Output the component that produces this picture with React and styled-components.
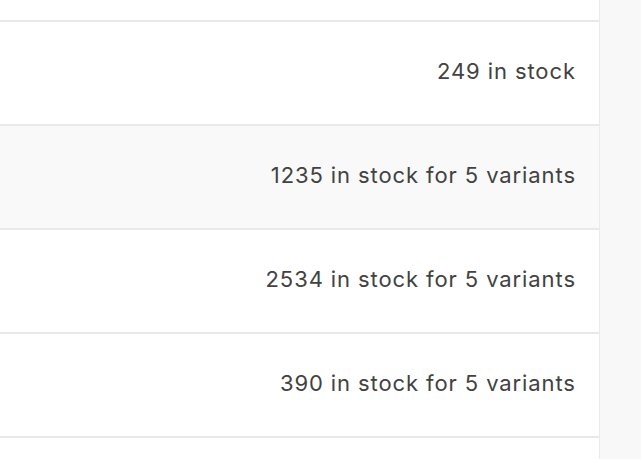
import React from 'react';
import styled, { createGlobalStyle } from 'styled-components';

const GlobalStyle = createGlobalStyle`
    html, body {
        margin: 0;
        padding: 0;
        background: #f8f8f8;
        font-family: Inter, "Helvetica Neue", "Liberation Sans", Arial, sans-serif;
        -webkit-font-smoothing: antialiased;
    }
`;

const rows = [
    { id: 1, label: "249 in stock" },
    { id: 2, label: "1235 in stock for 5 variants", hover: true },
    { id: 3, label: "2534 in stock for 5 variants" },
    { id: 4, label: "390 in stock for 5 variants" },
];

const App = () => {
    return (
        <React.Fragment>
            <GlobalStyle />
            <Page>
                <Panel>
                    <TopRow />
                    { rows.map(row => (
                        <Row key={ row.id } hover={ row.hover ? 1 : 0 }>
                            <Stock>{ row.label }</Stock>
                        </Row>
                    )) }
                    <Row />
                </Panel>
            </Page>
        </React.Fragment>
    );
};

export default App;

const Page = styled.div`
    display: flex;
    height: 459px;
    overflow: hidden;
`;

const Panel = styled.div`
    width: 599px;
    flex-shrink: 0;
    background: #ffffff;
    border-right: 1px solid #ebebeb;
    display: flex;
    flex-direction: column;
`;

const TopRow = styled.div`
    height: 20px;
    flex-shrink: 0;
    border-bottom: 2px solid #e9e9e9;
`;

const Row = styled.div`
    height: 102px;
    flex-shrink: 0;
    display: flex;
    align-items: center;
    justify-content: flex-end;
    padding-right: 24px;
    background: ${props => props.hover ? "#f9f9f9" : "#ffffff"};
    border-bottom: 2px solid #e9e9e9;
`;

const Stock = styled.span`
    font-size: 22px;
    line-height: 1;
    margin-top: -4px;
    color: #424242;
    letter-spacing: 0.9px;
    margin-right: -0.9px;
`;
